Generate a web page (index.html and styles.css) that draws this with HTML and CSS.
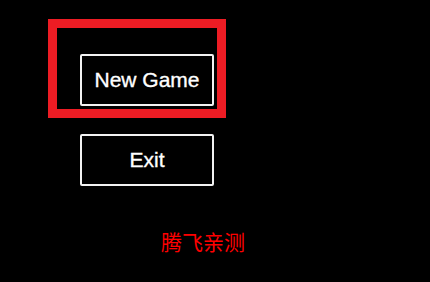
FILE: index.html
```html
<!DOCTYPE html>
<html>
<head>
<meta charset="utf-8">
<link rel="stylesheet" href="styles.css">
</head>
<body>
<div class="screen">
  <div class="menu">
    <div class="highlight">
      <button class="btn">New Game</button>
    </div>
    <button class="btn btn-exit">Exit</button>
  </div>
  <div class="credit">腾飞亲测</div>
</div>
</body>
</html>
```
FILE: styles.css
```css
html, body {
  margin: 0;
  padding: 0;
  background: #000;
  width: 430px;
  height: 282px;
  overflow: hidden;
}
.screen {
  padding: 19px 0 0 48px;
  display: flex;
  flex-direction: column;
}
.menu {
  display: flex;
  flex-direction: column;
  align-items: flex-start;
}
.highlight {
  border: 9px solid #ed1c24;
  padding: 26px 3px 3px 23px;
  width: 134px;
  height: 52px;
}
.btn {
  box-sizing: border-box;
  width: 134px;
  height: 52px;
  background: #000;
  color: #fff;
  border: 2px solid #f2f2f2;
  border-radius: 2px;
  font-family: "Liberation Sans", Arial, sans-serif;
  font-size: 21px;
  -webkit-text-stroke: 0.35px #fff;
  padding: 0;
  margin: 0;
  display: flex;
  align-items: center;
  justify-content: center;
}
.btn-exit {
  margin: 16px 0 0 32px;
}
.credit {
  margin: 42px 0 0 113px;
  color: #f00;
  font-family: "Noto Sans CJK SC", sans-serif;
  font-weight: 400;
  font-size: 21px;
  line-height: 26px;
}
```
